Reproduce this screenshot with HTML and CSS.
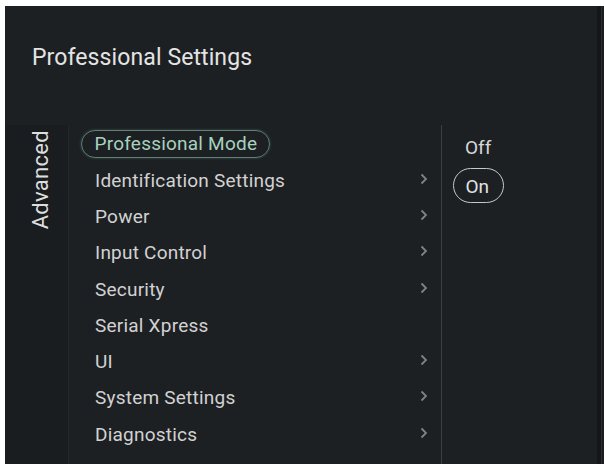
FILE: index.html
```html
<!DOCTYPE html>
<html lang="en">
<head>
<meta charset="utf-8">
<title>Professional Settings</title>
<link rel="stylesheet" href="styles.css">
</head>
<body>
<div class="frame">
  <div class="screen">
    <header class="header">Professional Settings</header>
    <div class="content">
      <aside class="sidebar"><span class="side-label">Advanced</span></aside>
      <ul class="menu">
        <li class="row"><span class="label pill">Professional Mode</span></li>
        <li class="row"><span class="label">Identification Settings</span><svg class="chev" viewBox="0 0 8 12"><polyline points="1.5,1.5 6,6 1.5,10.5"/></svg></li>
        <li class="row"><span class="label">Power</span><svg class="chev" viewBox="0 0 8 12"><polyline points="1.5,1.5 6,6 1.5,10.5"/></svg></li>
        <li class="row"><span class="label">Input Control</span><svg class="chev" viewBox="0 0 8 12"><polyline points="1.5,1.5 6,6 1.5,10.5"/></svg></li>
        <li class="row"><span class="label">Security</span><svg class="chev" viewBox="0 0 8 12"><polyline points="1.5,1.5 6,6 1.5,10.5"/></svg></li>
        <li class="row"><span class="label">Serial Xpress</span></li>
        <li class="row"><span class="label">UI</span><svg class="chev" viewBox="0 0 8 12"><polyline points="1.5,1.5 6,6 1.5,10.5"/></svg></li>
        <li class="row"><span class="label">System Settings</span><svg class="chev" viewBox="0 0 8 12"><polyline points="1.5,1.5 6,6 1.5,10.5"/></svg></li>
        <li class="row"><span class="label">Diagnostics</span><svg class="chev" viewBox="0 0 8 12"><polyline points="1.5,1.5 6,6 1.5,10.5"/></svg></li>
      </ul>
      <section class="options">
        <div class="opt">Off</div>
        <div class="opt opt-on">On</div>
      </section>
    </div>
  </div>
  <div class="edge"></div>
</div>
</body>
</html>
```

FILE: styles.css
```css
html, body {
  margin: 0;
  padding: 0;
  background: #ffffff;
}

body {
  font-family: Roboto, "Liberation Sans", sans-serif;
  overflow: hidden;
}

.frame {
  display: flex;
  margin: 6px 0 0 5px;
  height: 458px;
}

.screen {
  flex: 1;
  display: flex;
  flex-direction: column;
  background: #1d2023;
  color: #d6d6d6;
}

.edge {
  width: 11px;
  background: linear-gradient(to right, #1d2023 0, #1d2023 4px, #141619 4px, #141619 8px, #2b2e31 8px, #2b2e31 9px, #1a1c1f 9px);
}

.header {
  box-sizing: border-box;
  height: 119px;
  padding: 38px 0 0 27px;
  font-size: 23px;
  line-height: 27px;
  letter-spacing: 0.1px;
  color: #e4e4e4;
}

.content {
  flex: 1;
  display: flex;
}

.sidebar {
  width: 64px;
  background: #1a1d20;
  border-right: 1px solid #23262a;
  padding: 5px 0 0 24px;
  box-sizing: border-box;
}

.side-label {
  display: inline-block;
  writing-mode: vertical-rl;
  transform: rotate(180deg);
  font-size: 22px;
  line-height: 24px;
  letter-spacing: 0.3px;
  color: #dedede;
}

.menu {
  list-style: none;
  margin: 0;
  padding: 1px 13px 0 26px;
  width: 372px;
  box-sizing: border-box;
}

.row {
  height: 36.25px;
  display: flex;
  align-items: center;
  justify-content: space-between;
}

.label {
  font-size: 19px;
  line-height: 29px;
  letter-spacing: 0.22px;
  color: #d2d2d2;
}

.pill {
  line-height: 26px;
  border: 1.5px solid #5f8275;
  border-radius: 15px;
  padding: 0 12px 0 13px;
  margin-left: -14.5px;
  color: #a6d2bf;
  box-shadow: 0 0 3px rgba(110, 160, 140, 0.35);
}

.chev {
  width: 8px;
  height: 12px;
  margin-top: -3px;
  fill: none;
  stroke: #7f8286;
  stroke-width: 1.8;
}

.options {
  flex: 1;
  border-left: 1.5px solid #3b3e42;
  padding: 10.5px 0 0 23px;
}

.opt {
  font-size: 19px;
  line-height: 24px;
  color: #d8d8d8;
}

.opt-on {
  display: inline-block;
  margin: 8px 0 0 -12.5px;
  padding: 4px 14px 1px 12px;
  line-height: 28px;
  border: 1.5px solid #c8c8c8;
  border-radius: 18px;
  color: #e2e2e2;
}
```
